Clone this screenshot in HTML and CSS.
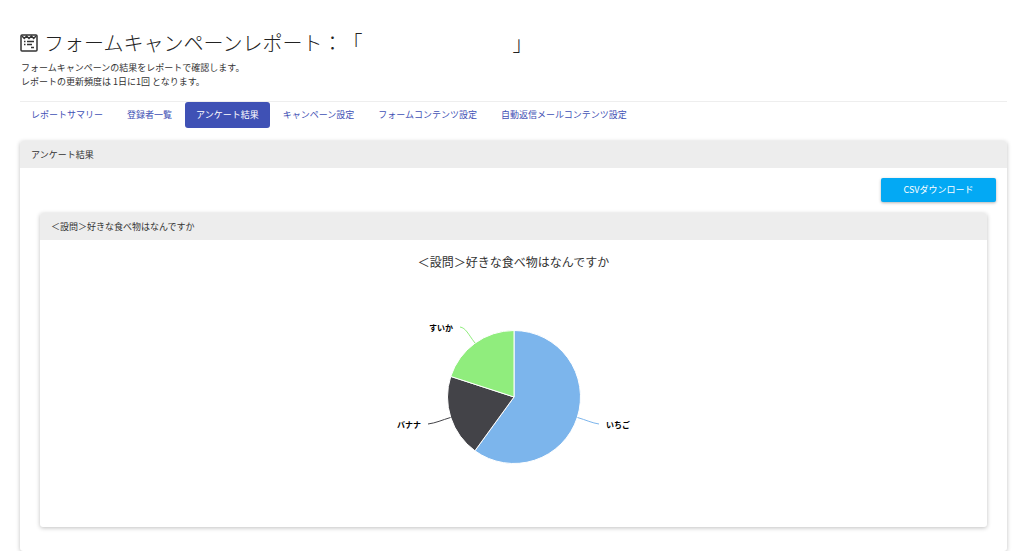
FILE: index.html
```html
<!DOCTYPE html>
<html lang="ja">
<head>
<meta charset="utf-8">
<meta name="viewport" content="width=device-width, initial-scale=1">
<title>フォームキャンペーンレポート</title>
<link rel="stylesheet" href="styles.css">
</head>
<body>
<main class="page">
  <header class="page-header">
    <h1 class="page-title">
      <svg class="title-icon" viewBox="0 0 18 18" aria-hidden="true">
        <rect x="1" y="1" width="16" height="16" rx="1"/>
        <path d="M2 2l2.300 2.500L6.600 2 9 4.500 11.400 2l2.300 2.500L16 2"/>
        <path d="M4 7.500h1.500M7 7.500h7M4 10.500h1.500M7 10.500h5M11 13.500h3"/>
      </svg>
      <span>フォームキャンペーンレポート：「<span class="campaign-name"></span>」</span>
    </h1>
    <p class="lead">フォームキャンペーンの結果をレポートで確認します。<br>レポートの更新頻度は 1日に1回 となります。</p>
  </header>
  <nav class="tabs">
    <a class="tab" href="#">レポートサマリー</a>
    <a class="tab" href="#">登録者一覧</a>
    <a class="tab active" href="#" aria-current="page">アンケート結果</a>
    <a class="tab" href="#">キャンペーン設定</a>
    <a class="tab" href="#">フォームコンテンツ設定</a>
    <a class="tab" href="#">自動返信メールコンテンツ設定</a>
  </nav>
  <section class="panel outer">
    <h2 class="panel-heading">アンケート結果</h2>
    <div class="panel-body">
      <div class="actions"><button class="download" type="button">CSVダウンロード</button></div>
      <section class="panel question">
        <h3 class="panel-heading">＜設問＞好きな食べ物はなんですか</h3>
        <div class="chart">
          <h4 class="chart-title">＜設問＞好きな食べ物はなんですか</h4>
          <svg class="pie" viewBox="0 0 280 150" role="img" aria-label="いちご 60%、バナナ 20%、すいか 20%">
            <g class="slices">
              <path class="ichigo" d="M140 76V9.500A66.500 66.500 0 1 1 100.910 129.800Z"/>
              <path class="banana" d="M140 76L100.910 129.800A66.500 66.500 0 0 1 76.750 55.450Z"/>
              <path class="suika" d="M140 76L76.750 55.450A66.500 66.500 0 0 1 140 9.500Z"/>
            </g>
            <path class="line ichigo-line" d="M203.500 96.500C212 99 218 102 225 103"/>
            <path class="line banana-line" d="M76.500 96.500C68 99 62 102 54 103"/>
            <path class="line suika-line" d="M101 22C94 13 92 7 86 6"/>
            <text x="232" y="107">いちご</text>
            <text x="47" y="107" text-anchor="end">バナナ</text>
            <text x="79" y="10" text-anchor="end">すいか</text>
          </svg>
        </div>
      </section>
    </div>
  </section>
</main>
</body>
</html>
```
FILE: styles.css
```css
* { box-sizing: border-box; }

body {
  margin: 0;
  background: #fff;
  color: #333;
  font-family: "Noto Sans CJK JP", sans-serif;
  font-size: 9px;
  line-height: 14px;
  text-spacing-trim: space-all;
}

h1, h2, h3, h4, p { margin: 0; font-weight: 400; }

.page {
  display: flex;
  flex-direction: column;
  min-height: 100vh;
  padding: 27px 20px 0;
}

.page-title {
  display: flex;
  align-items: center;
  gap: 6px;
  color: #222;
  font-size: 20px;
  font-weight: 300;
  line-height: 32px;
}

.title-icon {
  width: 18px;
  height: 18px;
  fill: none;
  stroke: #333;
  stroke-width: 1.5;
}

.campaign-name { display: inline-block; width: 150px; }

.lead { padding: 2px 0 0 1px; }

.page-header { padding-bottom: 12px; border-bottom: 1px solid #eee; }

.tabs { display: flex; flex-wrap: wrap; gap: 2px; }

.tab {
  padding: 6px 11px;
  border-radius: 3px;
  color: #3f51b5;
  text-decoration: none;
}

.tab.active { background: #3f51b5; color: #fff; }

.panel {
  border-radius: 3px;
  background: #fff;
  box-shadow: 0 1px 4px rgba(0, 0, 0, 0.25);
}

.outer { flex: 1; margin-top: 13px; }

.panel-heading {
  padding: 7px 11px 6px;
  border-radius: 3px 3px 0 0;
  background: #ededed;
  font-size: 9px;
}

.panel-body { padding: 10px 20px 23px; }

.actions { display: flex; justify-content: flex-end; margin-right: -9px; }

.download {
  min-width: 115px;
  padding: 5px 19px;
  border: 0;
  border-radius: 2px;
  background: #03a9f4;
  box-shadow: 0 1px 3px rgba(0, 0, 0, 0.3);
  color: #fff;
  font: inherit;
}

.question { margin-top: 11px; }

.chart {
  display: flex;
  flex-direction: column;
  align-items: center;
  padding: 13px 0 56px;
}

.chart-title { font-size: 12px; line-height: 18px; }

.pie { width: 280px; height: 150px; margin-top: 50px; }

.pie text { fill: #000; font-size: 8px; font-weight: 700; }

.slices { stroke: #fff; stroke-width: 1; stroke-linejoin: round; }
.ichigo { fill: #7cb5ec; }
.banana { fill: #434348; }
.suika { fill: #90ed7d; }

.line { fill: none; stroke-width: 1; }
.ichigo-line { stroke: #7cb5ec; }
.banana-line { stroke: #434348; }
.suika-line { stroke: #90ed7d; }
```
